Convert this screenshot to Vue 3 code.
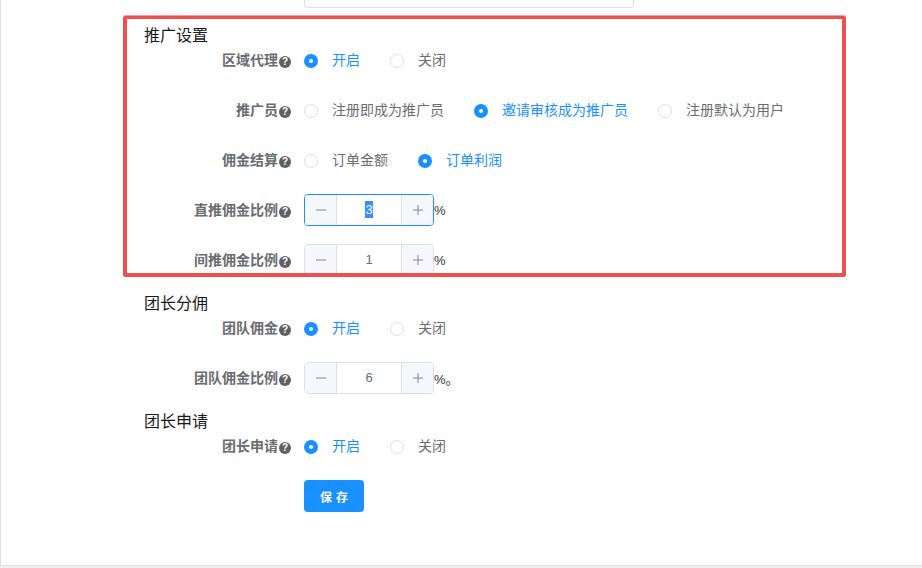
<script setup>
const sections = [
  {
    title: '推广设置',
    rows: [
      { label: '区域代理', type: 'radio', options: [{ text: '开启', on: true }, { text: '关闭' }] },
      { label: '推广员', type: 'radio', options: [{ text: '注册即成为推广员' }, { text: '邀请审核成为推广员', on: true }, { text: '注册默认为用户' }] },
      { label: '佣金结算', type: 'radio', options: [{ text: '订单金额' }, { text: '订单利润', on: true }] },
      { label: '直推佣金比例', type: 'number', value: '3', suffix: '%', focused: true },
      { label: '间推佣金比例', type: 'number', value: '1', suffix: '%' },
    ],
  },
  {
    title: '团长分佣',
    rows: [
      { label: '团队佣金', type: 'radio', options: [{ text: '开启', on: true }, { text: '关闭' }] },
      { label: '团队佣金比例', type: 'number', value: '6', suffix: '%。' },
    ],
  },
  {
    title: '团长申请',
    rows: [
      { label: '团长申请', type: 'radio', options: [{ text: '开启', on: true }, { text: '关闭' }] },
    ],
  },
]
</script>

<template>
  <div class="page">
    <main class="card">
      <div class="prev-input"></div>
      <section v-for="s in sections" :key="s.title">
        <h3 class="title">{{ s.title }}</h3>
        <div v-for="r in s.rows" :key="r.label" class="row">
          <label class="label"><span class="label-text">{{ r.label }}</span><span class="help">?</span></label>
          <div v-if="r.type === 'radio'" class="radios">
            <span v-for="o in r.options" :key="o.text" class="radio" :class="{ on: o.on }">
              <i class="dot"></i><span class="radio-text">{{ o.text }}</span>
            </span>
          </div>
          <div v-else class="number-wrap">
            <div class="number" :class="{ focused: r.focused }">
              <span class="step">
                <svg width="12" height="12" viewBox="0 0 12 12"><path d="M1 6h10" stroke="#808695" stroke-width="1" /></svg>
              </span>
              <span class="value"><span :class="{ selected: r.focused }">{{ r.value }}</span></span>
              <span class="step">
                <svg width="12" height="12" viewBox="0 0 12 12"><path d="M1 6h10M6 1v10" stroke="#808695" stroke-width="1" /></svg>
              </span>
            </div>
            <span class="suffix">{{ r.suffix }}</span>
          </div>
        </div>
      </section>
      <button class="save">保 存</button>
    </main>
    <div class="highlight"></div>
  </div>
</template>

<style>
html, body { margin: 0; background: #fff; }
</style>

<style scoped>
.page {
  position: relative;
  height: 568px;
  overflow: hidden;
  font-family: "Noto Sans CJK SC", "Noto Sans", sans-serif;
  font-size: 14px;
  color: #6a6c70;
  background: #f0f0f2;
}
.card {
  box-sizing: border-box;
  height: 566px;
  padding-left: 143px;
  background: #fff;
  border-left: 1px solid #dcdfe9;
  border-bottom: 1px solid #dfe0e4;
}
.prev-input {
  box-sizing: border-box;
  width: 330px;
  height: 8px;
  margin: 0 0 18px 160px;
  border: 1px solid #dcdee2;
  border-top: 0;
  border-radius: 0 0 4px 4px;
}
.title {
  margin: 0;
  height: 18px;
  line-height: 16px;
  font-size: 16px;
  font-weight: 400;
  color: #17191c;
}
.row {
  display: flex;
  align-items: center;
  height: 32px;
  margin-bottom: 18px;
}
.label {
  display: flex;
  align-items: center;
  justify-content: flex-end;
  box-sizing: border-box;
  width: 160px;
  padding-right: 13px;
  font-weight: 700;
  color: #6a6c70;
}
.label-text {
  padding-bottom: 2px;
}
.help {
  flex: none;
  width: 12px;
  height: 12px;
  margin: 4px 0 0 1px;
  border-radius: 50%;
  background: #606060;
  color: #fff;
  font: 700 10px/12px "Liberation Sans", sans-serif;
  text-align: center;
}
.radios {
  display: flex;
  gap: 30px;
}
.radio {
  display: flex;
  align-items: center;
  line-height: 20px;
}
.radio.on { color: #1890ff; }
.radio-text {
  padding-bottom: 2px;
}
.dot {
  box-sizing: border-box;
  width: 14px;
  height: 14px;
  margin: 2px 14px 0 0;
  border: 1px solid #dcdee2;
  border-radius: 50%;
  background: #fff;
}
.on .dot {
  border: 5px solid #1890ff;
}
.number-wrap {
  display: flex;
  align-items: center;
}
.number {
  display: flex;
  box-sizing: border-box;
  width: 130px;
  height: 32px;
  border: 1px solid #dcdfe6;
  border-radius: 4px;
  overflow: hidden;
}
.number.focused { border-color: #1890ff; }
.step {
  flex: none;
  display: flex;
  align-items: center;
  justify-content: center;
  width: 31px;
  background: #f5f7fa;
}
.step:first-child { border-right: 1px solid #dcdfe6; }
.step:last-child { border-left: 1px solid #dcdfe6; }
.value {
  flex: 1;
  text-align: center;
  font-family: "Liberation Sans", sans-serif;
  font-size: 13px;
  line-height: 30px;
}
.selected {
  background: #3390ff;
  color: #fff;
  padding: 1px 0;
}
.suffix {
  font-family: "Liberation Sans", "Noto Sans CJK SC", sans-serif;
  font-size: 13px;
  color: #303133;
}
.save {
  display: block;
  width: 60px;
  height: 32px;
  margin-left: 160px;
  padding: 0;
  border: 0;
  border-radius: 4px;
  background: #1890ff;
  color: #fff;
  font: 700 12px "Noto Sans CJK SC", sans-serif;
  word-spacing: 1.3px;
}
.highlight {
  position: absolute;
  left: 123px;
  top: 16px;
  width: 723px;
  height: 261px;
  box-sizing: border-box;
  border: 4px solid #ee5050;
  border-top-width: 3px;
  border-radius: 2px;
  box-shadow: 0 -1px 0 rgba(238, 80, 80, 0.55);
  pointer-events: none;
}
</style>
